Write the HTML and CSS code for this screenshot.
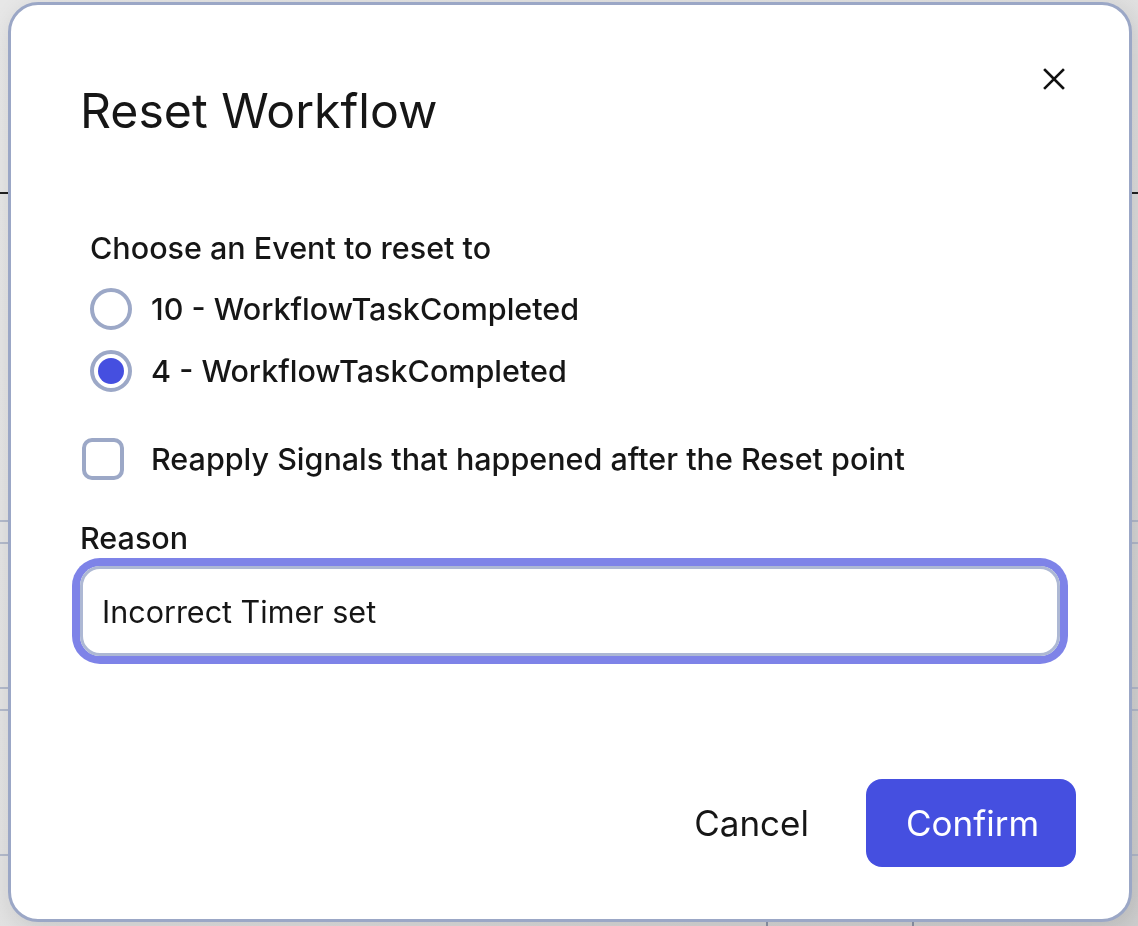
FILE: index.html
```html
<!DOCTYPE html>
<html lang="en">
<head>
<meta charset="utf-8">
<title>Reset Workflow</title>
<link rel="stylesheet" href="styles.css">
</head>
<body>
<div class="page">
  <div class="page-row row-a"></div>
  <div class="page-row row-b"></div>
  <div class="page-row row-c"></div>
  <div class="page-row row-d"></div>
  <div class="page-row row-e"></div>
  <div class="page-row row-f"></div>
  <div class="page-cells">
    <div class="cell cell-1"></div>
    <div class="cell cell-2"></div>
    <div class="cell cell-3"></div>
  </div>
</div>

<div class="dialog" role="dialog" aria-labelledby="dlg-title">
  <header class="dialog-header">
    <h1 class="dialog-title" id="dlg-title">Reset Workflow</h1>
    <button class="close-btn" aria-label="Close">
      <svg width="22" height="22" viewBox="0 0 22 22" fill="none" stroke="#111" stroke-width="2.6" stroke-linecap="square">
        <path d="M2 2 L20 20 M20 2 L2 20"/>
      </svg>
    </button>
  </header>

  <div class="dialog-body">
    <div class="events" role="radiogroup" aria-labelledby="events-label">
      <div class="events-label" id="events-label">Choose an Event to reset to</div>
      <div class="radio-list">
        <label class="radio-row">
          <span class="radio"></span>
          <span class="radio-label">10 - WorkflowTaskCompleted</span>
        </label>
        <label class="radio-row">
          <span class="radio radio-checked"><span class="radio-dot"></span></span>
          <span class="radio-label">4 - WorkflowTaskCompleted</span>
        </label>
      </div>
    </div>

    <label class="check-row">
      <span class="checkbox"></span>
      <span class="check-label">Reapply Signals that happened after the Reset point</span>
    </label>

    <div class="field">
      <label class="field-label" for="reason">Reason</label>
      <div class="input" id="reason">Incorrect Timer set</div>
    </div>
  </div>

  <footer class="dialog-footer">
    <button class="btn btn-cancel">Cancel</button>
    <button class="btn btn-confirm">Confirm</button>
  </footer>
</div>
</body>
</html>
```

FILE: styles.css
```css
* { box-sizing: border-box; }

html, body {
  margin: 0;
  padding: 0;
}

body {
  width: 1138px;
  height: 926px;
  overflow: hidden;
  background: linear-gradient(135deg, #e7e7e7 0%, #e0e0e0 60%, #cfcfcf 100%);
  font-family: Inter, "Noto Sans", "Liberation Sans", sans-serif;
  color: #161616;
}

/* underlying page */
.page {
  width: 1138px;
  height: 926px;
  display: flex;
  flex-direction: column;
}
.page-row { flex: none; border-bottom: 2px solid #b3bacb; }
.row-a { height: 194px; border-bottom-color: #222; }
.row-b { height: 328px; }
.row-c { height: 22px; }
.row-d { height: 145px; }
.row-e { height: 22px; }
.row-f { height: 145px; }
.page-cells { flex: 1; display: flex; }
.cell { height: 100%; }
.cell-1 { width: 766px; }
.cell-2 { width: 146px; border-left: 2px solid #8c94a8; }
.cell-3 { flex: 1; border-left: 2px solid #8c94a8; }

/* dialog */
.dialog {
  position: fixed;
  top: 2px;
  left: 8px;
  width: 1124px;
  height: 920px;
  background: #fff;
  border: 3px solid #9ba7c6;
  border-radius: 30px;
  box-shadow: 4px 6px 24px rgba(0, 0, 0, 0.12);
  display: flex;
  flex-direction: column;
}

.dialog-header {
  display: flex;
  justify-content: space-between;
  align-items: flex-start;
  padding: 63px 64px 0 69px;
}

.dialog-title {
  margin: 15px 0 0 0;
  font-size: 48.2px;
  line-height: 56px;
  font-weight: 400;
  letter-spacing: 0;
}

.close-btn {
  width: 22px;
  height: 22px;
  padding: 0;
  border: 0;
  background: none;
  display: flex;
}

.dialog-body {
  padding: 0 69px;
  display: flex;
  flex-direction: column;
}

.events {
  margin-top: 91px;
  padding-left: 10px;
  display: flex;
  flex-direction: column;
  gap: 22px;
}

.events-label {
  font-size: 30.5px;
  line-height: 36px;
  font-weight: 500;
}

.radio-list {
  display: flex;
  flex-direction: column;
  gap: 20px;
}

.radio-row, .check-row {
  display: flex;
  align-items: center;
  gap: 19px;
  height: 42px;
  font-size: 30.5px;
  line-height: 36px;
  font-weight: 500;
}

.radio {
  flex: none;
  width: 42px;
  height: 42px;
  border-radius: 50%;
  border: 4px solid #9ca8c7;
  display: flex;
  align-items: center;
  justify-content: center;
}
.radio-dot {
  width: 26px;
  height: 26px;
  border-radius: 50%;
  background: #454fe0;
}

.check-row {
  margin-top: 46px;
  margin-left: 2px;
  gap: 27px;
}

.checkbox {
  flex: none;
  width: 42px;
  height: 42px;
  border: 4px solid #9ca8c7;
  border-radius: 10px;
}

.field {
  margin-top: 40px;
  display: flex;
  flex-direction: column;
  gap: 10px;
}

.field-label {
  font-size: 30.5px;
  line-height: 36px;
  font-weight: 500;
}

.input {
  height: 90px;
  border: 3px solid #adb8d4;
  border-radius: 20px;
  box-shadow: 0 0 0 8px #7e83e8;
  padding: 0 19px;
  display: flex;
  align-items: center;
  font-size: 30.5px;
  font-weight: 400;
}

.dialog-footer {
  margin-top: auto;
  padding: 0 53px 52px 0;
  display: flex;
  justify-content: flex-end;
  gap: 17px;
}

.btn {
  height: 88px;
  padding: 0 40px;
  border: 0;
  border-radius: 16px;
  font-family: inherit;
  font-size: 35px;
  font-weight: 400;
}
.btn-cancel { background: transparent; color: #161616; }
.btn-confirm { background: #454fe0; color: #fff; width: 210px; }
```
